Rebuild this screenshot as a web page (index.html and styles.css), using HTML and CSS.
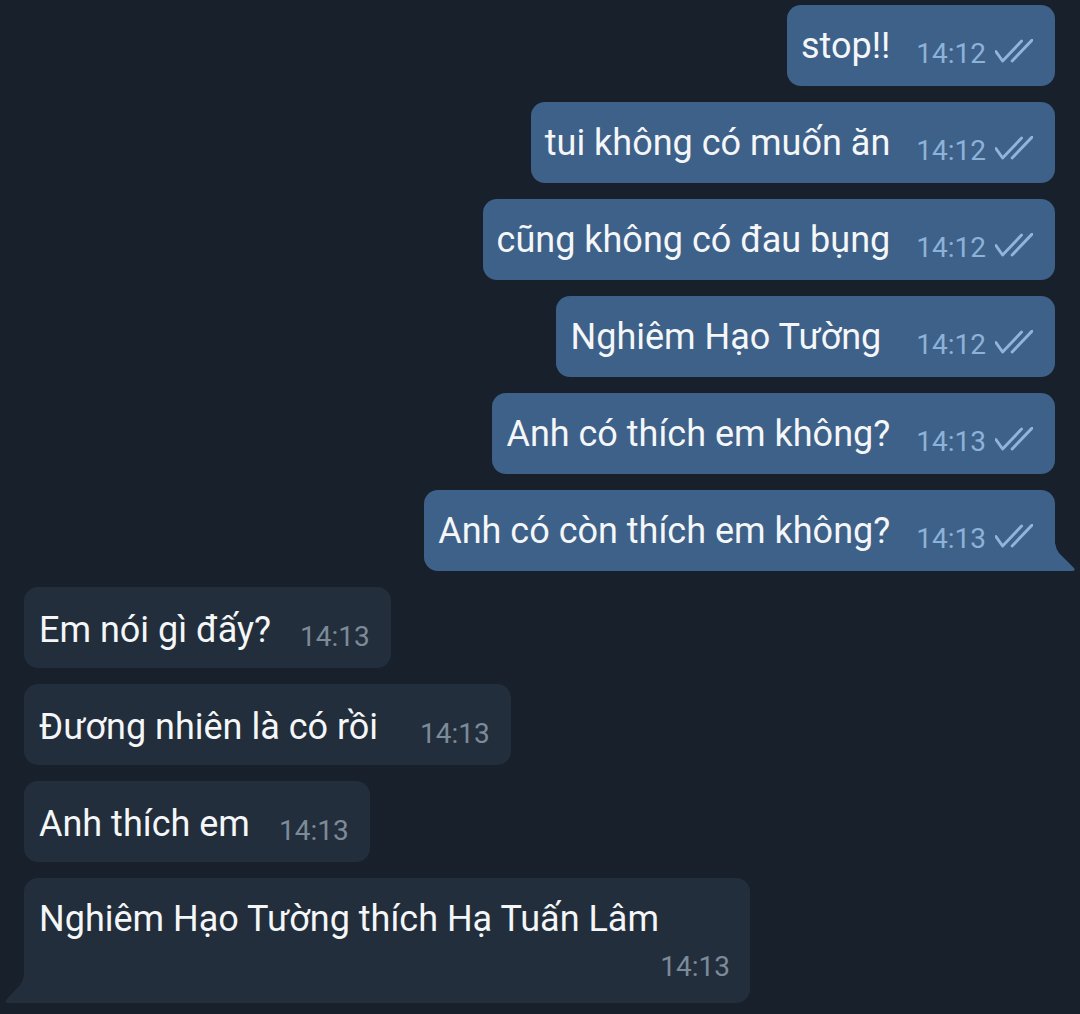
FILE: index.html
```html
<!DOCTYPE html>
<html lang="vi">

<head>
    <meta charset="UTF-8">
    <meta name="viewport" content="width=device-width, initial-scale=1.0">
    <title>Chat</title>
    <link rel="stylesheet" href="styles.css">
</head>

<body>
    <div id="chat">
        <div class="msg out">
            <span class="text">stop!!</span><span class="meta"><span class="time">14:12</span><svg class="check" viewBox="0 0 40 26"><path d="M1 13 L8 23 L28 2 M18 23 L39 1" /></svg></span>
        </div>
        <div class="msg out">
            <span class="text">tui không có muốn ăn</span><span class="meta"><span class="time">14:12</span><svg class="check" viewBox="0 0 40 26"><path d="M1 13 L8 23 L28 2 M18 23 L39 1" /></svg></span>
        </div>
        <div class="msg out">
            <span class="text">cũng không có đau bụng</span><span class="meta"><span class="time">14:12</span><svg class="check" viewBox="0 0 40 26"><path d="M1 13 L8 23 L28 2 M18 23 L39 1" /></svg></span>
        </div>
        <div class="msg out">
            <span class="text">Nghiêm Hạo Tường&nbsp;</span><span class="meta"><span class="time">14:12</span><svg class="check" viewBox="0 0 40 26"><path d="M1 13 L8 23 L28 2 M18 23 L39 1" /></svg></span>
        </div>
        <div class="msg out">
            <span class="text">Anh có thích em không?</span><span class="meta"><span class="time">14:13</span><svg class="check" viewBox="0 0 40 26"><path d="M1 13 L8 23 L28 2 M18 23 L39 1" /></svg></span>
        </div>
        <div class="msg out tail">
            <span class="text">Anh có còn thích em không?</span><span class="meta"><span class="time">14:13</span><svg class="check" viewBox="0 0 40 26"><path d="M1 13 L8 23 L28 2 M18 23 L39 1" /></svg></span>
        </div>

        <div class="msg in">
            <span class="text">Em nói gì đấy?</span><span class="meta"><span class="time">14:13</span></span>
        </div>
        <div class="msg in">
            <span class="text">Đương nhiên là có rồi&nbsp;</span><span class="meta wide"><span class="time">14:13</span></span>
        </div>
        <div class="msg in">
            <span class="text">Anh thích em</span><span class="meta"><span class="time">14:13</span></span>
        </div>
        <div class="msg in tail long">
            <div class="text">Nghiêm Hạo Tường thích Hạ Tuấn Lâm</div>
            <div class="meta"><span class="time">14:13</span></div>
        </div>
    </div>
</body>

</html>
```

FILE: styles.css
```css
* {
    margin: 0;
    padding: 0;
    box-sizing: border-box;
}

body {
    background-color: #17202b;
    font-family: Roboto, "Noto Sans", sans-serif;
    color: #f4f6f8;
    width: 1080px;
    height: 1014px;
    overflow: hidden;
}

#chat {
    display: flex;
    flex-direction: column;
    gap: 16px;
    padding: 5px 25px 0 24px;
}

.msg {
    position: relative;
    height: 81px;
    border-radius: 14px;
    padding: 19px 22px 18px 14px;
    line-height: 44px;
    white-space: nowrap;
}

.msg .text {
    font-size: 36px;
}

.meta {
    display: inline-block;
    margin-left: 26px;
    font-size: 28px;
    line-height: 44px;
    vertical-align: -5px;
}

.out {
    align-self: flex-end;
    background-color: #3e6189;
}

.out .time {
    color: #8db2d8;
}

.in {
    align-self: flex-start;
    background-color: #222e3b;
    padding: 21px 21px 16px 15px;
}

.in .meta {
    margin-left: 29px;
    vertical-align: -4px;
}

.in .meta.wide {
    margin-left: 33px;
}

.in .time {
    color: #7c8a99;
}

.check {
    width: 38px;
    height: 25px;
    margin-left: 9px;
    vertical-align: -1px;
    fill: none;
    stroke: #8fb5dc;
    stroke-width: 3;
    stroke-linecap: round;
    stroke-linejoin: round;
}

.out.tail {
    border-bottom-right-radius: 0;
}

.out.tail::after {
    content: "";
    position: absolute;
    right: -20px;
    bottom: 0;
    width: 20px;
    height: 28px;
    background-color: #3e6189;
    clip-path: path('M0 0 Q1 6 4 10 L19 25 Q21 28 17 28 L0 28 Z');
}

.in.tail {
    border-bottom-left-radius: 0;
}

.in.tail::after {
    content: "";
    position: absolute;
    left: -19px;
    bottom: 0;
    width: 19px;
    height: 28px;
    background-color: #222e3b;
    clip-path: path('M19 0 Q18 6 15 10 L1 25 Q-1 28 3 28 L19 28 Z');
}

.long {
    width: 726px;
    height: 125px;
    padding: 19px 20px 0 15px;
}

.long .meta {
    display: block;
    margin-left: 0;
    margin-top: 6px;
    text-align: right;
    line-height: 40px;
}
```
